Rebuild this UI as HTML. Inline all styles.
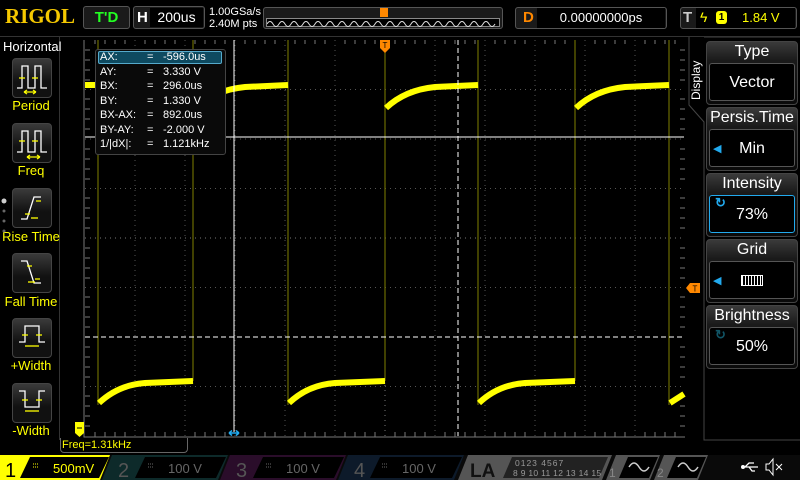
<!DOCTYPE html>
<html><head><meta charset="utf-8"><style>
*{margin:0;padding:0;box-sizing:border-box}
body{width:800px;height:480px;background:#000;overflow:hidden;position:relative;font-family:"Liberation Sans",sans-serif;color:#fff}
.a{position:absolute}
.btn{position:absolute;left:12px;width:40px;height:40px;border-radius:4px;background:linear-gradient(#3a3a3a,#111 60%);border:1px solid #444}
.lbl{position:absolute;left:0;width:62px;text-align:center;color:#ff0;font-size:13px}
.rh{position:absolute;left:706px;width:92px;height:64px;border:1px solid #444;border-radius:4px;background:linear-gradient(#3a3a3a,#1a1a1a 30%,#0a0a0a)}
.rh .t{text-align:center;font-size:16px;color:#fff;height:20px;line-height:20px}
.rh .b{position:absolute;left:2px;top:21px;width:86px;height:38px;border:1px solid #555;border-radius:3px;background:#000;text-align:center;line-height:38px;font-size:16px}
.mr td{padding:0;height:14.5px}
</style></head><body>
<!-- header -->
<div class="a" style="left:5px;top:4px;font-family:'Liberation Serif',serif;font-weight:bold;font-size:21px;color:#f5c800">RIGOL</div>
<div class="a" style="left:83px;top:6px;width:47px;height:23px;border:1px solid #555;border-radius:3px;background:#1a1a1a;color:#2f2;font-weight:bold;font-size:15px;text-align:center;line-height:22px">T'D</div>
<div class="a" style="left:133px;top:6px;width:72px;height:23px;border:1px solid #555;border-radius:3px;background:#1a1a1a"></div>
<div class="a" style="left:137px;top:9px;font-weight:bold;font-size:15px">H</div>
<div class="a" style="left:150px;top:8px;width:53px;height:19px;background:#000;font-size:14px;text-align:center;line-height:19px">200us</div>
<div class="a" style="left:209px;top:6px;font-size:11px;line-height:12px">1.00GSa/s<br>2.40M pts</div>
<div class="a" style="left:263px;top:7px;width:240px;height:22px;border:1px solid #555;border-radius:3px;background:#1a1a1a"></div>
<div class="a" style="left:266px;top:18px;width:234px;height:9px;border:1px solid #888;background:#000"></div>
<svg class="a" style="left:267px;top:19px" width="232" height="8"><path d="M0,5 q3,-5 6,0 t6,0 t6,0 t6,0 t6,0 t6,0 t6,0 t6,0 t6,0 t6,0 t6,0 t6,0 t6,0 t6,0 t6,0 t6,0 t6,0 t6,0 t6,0 t6,0 t6,0 t6,0 t6,0 t6,0 t6,0 t6,0 t6,0 t6,0 t6,0 t6,0 t6,0 t6,0 t6,0 t6,0 t6,0 t6,0 t6,0 t6,0" stroke="#ddd" fill="none"/></svg>
<div class="a" style="left:380px;top:8px;width:8px;height:9px;background:#f80"></div>
<div class="a" style="left:515px;top:7px;width:152px;height:22px;border:1px solid #555;border-radius:3px;background:#1a1a1a"></div>
<div class="a" style="left:523px;top:9px;color:#f80;font-weight:bold;font-size:15px">D</div>
<div class="a" style="left:537px;top:8px;width:128px;height:20px;background:#000;font-size:13px;text-align:center;line-height:20px">0.00000000ps</div>
<div class="a" style="left:680px;top:7px;width:117px;height:22px;border:1px solid #555;border-radius:3px;background:#1a1a1a"></div>
<div class="a" style="left:683px;top:9px;color:#ccc;font-weight:bold;font-size:15px">T</div>
<div class="a" style="left:696px;top:8px;width:99px;height:20px;background:#000"></div>
<div class="a" style="left:700px;top:9px;color:#ff0;font-size:14px">ϟ</div>
<div class="a" style="left:716px;top:11px;width:11px;height:13px;background:#ff0;border-radius:3px;color:#000;font-size:10px;text-align:center;font-weight:bold;line-height:13px">1</div>
<div class="a" style="left:742px;top:10px;color:#ff0;font-size:13px">1.84 V</div>
<div class="a" style="left:0;top:36px;width:800px;height:1px;background:#333"></div>

<!-- left menu -->
<div class="a" style="left:0;top:37px;width:60px;height:403px;border-right:1px solid #333"></div>
<div class="a" style="left:3px;top:39px;font-size:13px">Horizontal</div>
<div class="btn" style="top:58px"></div><div class="lbl" style="top:98px">Period</div>
<div class="btn" style="top:123px"></div><div class="lbl" style="top:163px">Freq</div>
<div class="btn" style="top:188px"></div><div class="lbl" style="top:229px">Rise Time</div>
<div class="btn" style="top:253px"></div><div class="lbl" style="top:294px">Fall Time</div>
<div class="btn" style="top:318px"></div><div class="lbl" style="top:358px">+Width</div>
<div class="btn" style="top:383px"></div><div class="lbl" style="top:423px">-Width</div>
<svg class="a" style="left:0;top:0" width="62" height="440" fill="none" stroke="#fff" stroke-width="1.3">
<path d="M17,88 H22 V66 H28 V88 H35 V66 H41 V88 H47"/><path d="M19,78h6M32,78h6" stroke="#ff0"/><path d="M24,92 H36 M24,92 l3,-2 M24,92 l3,2 M36,92 l-3,-2 M36,92 l-3,2" stroke="#ff0"/>
<path d="M17,152 H22 V131 H28 V152 H35 V131 H41 V152 H47"/><path d="M19,141h6M32,141h6" stroke="#ff0"/><path d="M27,157 H40 M27,157 l3,-2 M27,157 l3,2 M40,157 l-3,-2 M40,157 l-3,2" stroke="#ff0"/>
<path d="M21,219 H27 L34,197 H41"/><path d="M25,214h5M36,201h5" stroke="#ff0"/><path d="M31,218 H38" stroke="#ff0"/>
<path d="M21,261 H27 L34,283 H41"/><path d="M27,266h5M35,279h5" stroke="#ff0"/><path d="M28,282 H35" stroke="#ff0"/>
<path d="M19,342 H25 V326 H39 V342 H45"/><path d="M22,335h6M36,335h6" stroke="#ff0"/><path d="M25,346 H39" stroke="#ff0"/>
<path d="M19,391 H25 V407 H39 V391 H45"/><path d="M22,400h6M36,400h6" stroke="#ff0"/><path d="M25,411 H39" stroke="#ff0"/>
<circle cx="4" cy="201" r="2.5" fill="#ccc" stroke="none"/><circle cx="4" cy="211" r="1.5" fill="#666" stroke="none"/><circle cx="4" cy="221" r="1.5" fill="#666" stroke="none"/><circle cx="4" cy="231" r="1.5" fill="#666" stroke="none"/>
</svg>

<!-- grid -->
<svg class="a" style="left:0;top:0" width="800" height="480">
<g stroke="#555" stroke-width="1" stroke-dasharray="1,4">
<line x1="135" y1="40" x2="135" y2="436"/><line x1="185" y1="40" x2="185" y2="436"/><line x1="235" y1="40" x2="235" y2="436"/><line x1="285" y1="40" x2="285" y2="436"/><line x1="335" y1="40" x2="335" y2="436"/><line x1="435" y1="40" x2="435" y2="436"/><line x1="485" y1="40" x2="485" y2="436"/><line x1="535" y1="40" x2="535" y2="436"/><line x1="585" y1="40" x2="585" y2="436"/><line x1="635" y1="40" x2="635" y2="436"/>
<line x1="85" y1="89.5" x2="685" y2="89.5"/><line x1="85" y1="139" x2="685" y2="139"/><line x1="85" y1="188.5" x2="685" y2="188.5"/><line x1="85" y1="287.5" x2="685" y2="287.5"/><line x1="85" y1="386.5" x2="685" y2="386.5"/>
</g>
<g stroke="#777"><line x1="385" y1="40" x2="385" y2="436" stroke-dasharray="1,4"/><line x1="85" y1="238" x2="685" y2="238" stroke-dasharray="1,4"/></g>
<path d="M84,40 V437 H685" stroke="#777" fill="none"/>
<g stroke="#777"><path d="M85,50h5M85,60h5M85,70h5M85,80h5M85,99h5M85,109h5M85,119h5M85,129h5M85,149h5M85,159h5M85,169h5M85,179h5M85,198h5M85,208h5M85,218h5M85,228h5M85,248h5M85,258h5M85,268h5M85,278h5M85,297h5M85,307h5M85,317h5M85,327h5M85,347h5M85,357h5M85,367h5M85,377h5M85,396h5M85,406h5M85,416h5M85,426h5"/>
<path d="M95,437v-5M105,437v-5M115,437v-5M125,437v-5M145,437v-5M155,437v-5M165,437v-5M175,437v-5M195,437v-5M205,437v-5M215,437v-5M225,437v-5M245,437v-5M255,437v-5M265,437v-5M275,437v-5M295,437v-5M305,437v-5M315,437v-5M325,437v-5M345,437v-5M355,437v-5M365,437v-5M375,437v-5M395,437v-5M405,437v-5M415,437v-5M425,437v-5M445,437v-5M455,437v-5M465,437v-5M475,437v-5M495,437v-5M505,437v-5M515,437v-5M525,437v-5M545,437v-5M555,437v-5M565,437v-5M575,437v-5M595,437v-5M605,437v-5M615,437v-5M625,437v-5M645,437v-5M655,437v-5M665,437v-5M675,437v-5"/>
<path d="M95,40v4M105,40v4M115,40v4M125,40v4M145,40v4M155,40v4M165,40v4M175,40v4M195,40v4M205,40v4M215,40v4M225,40v4M245,40v4M255,40v4M265,40v4M275,40v4M295,40v4M305,40v4M315,40v4M325,40v4M345,40v4M355,40v4M365,40v4M375,40v4M395,40v4M405,40v4M415,40v4M425,40v4M445,40v4M455,40v4M465,40v4M475,40v4M495,40v4M505,40v4M515,40v4M525,40v4M545,40v4M555,40v4M565,40v4M575,40v4M595,40v4M605,40v4M615,40v4M625,40v4M645,40v4M655,40v4M665,40v4M675,40v4"/>
<path d="M685,50h-5M685,60h-5M685,70h-5M685,80h-5M685,99h-5M685,109h-5M685,119h-5M685,129h-5M685,149h-5M685,159h-5M685,169h-5M685,179h-5M685,198h-5M685,208h-5M685,218h-5M685,228h-5M685,248h-5M685,258h-5M685,268h-5M685,278h-5M685,297h-5M685,307h-5M685,317h-5M685,327h-5M685,347h-5M685,357h-5M685,367h-5M685,377h-5M685,396h-5M685,406h-5M685,416h-5M685,426h-5"/></g>
<g stroke="#6b6b00" stroke-width="1.2"><line x1="98" y1="40" x2="98" y2="405"/><line x1="193" y1="40" x2="193" y2="381"/><line x1="288" y1="40" x2="288" y2="405"/><line x1="385" y1="40" x2="385" y2="381"/><line x1="478" y1="40" x2="478" y2="405"/><line x1="575" y1="40" x2="575" y2="381"/><line x1="669" y1="40" x2="669" y2="405"/></g>
<g stroke="#ff0" stroke-width="6" fill="none">
<path d="M85,85 H98"/>
<path d="M99,403 Q118,385 145,383 L193,381"/>
<path d="M194,108 Q215,90 245,87 L288,85"/>
<path d="M289,403 Q308,385 335,383 L385,381"/>
<path d="M386,108 Q405,90 435,87 L478,85"/>
<path d="M479,403 Q498,385 525,383 L575,381"/>
<path d="M576,108 Q595,90 625,87 L669,85"/>
<path d="M670,403 L684,394"/>
</g>
<line x1="234" y1="40" x2="234" y2="432" stroke="#fff"/>
<line x1="458" y1="40" x2="458" y2="436" stroke="#fff" stroke-dasharray="5,3"/>
<line x1="85" y1="137" x2="684" y2="137" stroke="#fff"/>
<line x1="85" y1="337" x2="684" y2="337" stroke="#fff" stroke-dasharray="5,3"/>
<path d="M229,433 H239 M229,433 l3,-2.5 M229,433 l3,2.5 M239,433 l-3,-2.5 M239,433 l-3,2.5" stroke="#2ae" stroke-width="1.5"/>
<path d="M380,40 H390 V48 L385,53 L380,48 Z" fill="#f80"/><text x="385" y="48" font-size="8" fill="#000" text-anchor="middle" font-family="Liberation Sans">T</text>
<path d="M686,288 L690,283 H700 V293 H690 Z" fill="#f80"/><text x="695" y="291.5" font-size="8" fill="#000" text-anchor="middle" font-family="Liberation Sans">T</text>
<path d="M75,422 H84 V433 L79.5,437 L75,433 Z" fill="#ff0"/><path d="M77,428 h5" stroke="#000"/>
</svg>

<div class="a" style="left:95px;top:49px;width:131px;height:106px;background:#0a0a0a;border:1px solid #444;border-radius:3px"></div>
<div class="a" style="left:98px;top:51px;width:124px;height:13px;background:#0e4a60;border:1px solid #5ac;border-radius:2px"></div>
<table class="a mr" style="left:100px;top:50px;font-size:11px;border-collapse:collapse;line-height:14.5px">
<tr><td style="width:47px">AX:</td><td style="width:16px">=</td><td>-596.0us</td></tr>
<tr><td>AY:</td><td>=</td><td>3.330 V</td></tr>
<tr><td>BX:</td><td>=</td><td>296.0us</td></tr>
<tr><td>BY:</td><td>=</td><td>1.330 V</td></tr>
<tr><td>BX-AX:</td><td>=</td><td>892.0us</td></tr>
<tr><td>BY-AY:</td><td>=</td><td>-2.000 V</td></tr>
<tr><td>1/|dX|:</td><td>=</td><td>1.121kHz</td></tr>
</table>

<div class="a" style="left:60px;top:438px;width:128px;height:15px;border:1px solid #666;border-top:none;border-radius:0 0 4px 4px;color:#ff0;font-size:11px;padding-left:1px;line-height:14px">Freq=1.31kHz</div>

<svg class="a" style="left:686px;top:37px" width="114" height="404"><path d="M3,0 V68 L18,85 V403 H114" stroke="#444" fill="none"/><path d="M18,0 H114" stroke="#444" fill="none"/></svg>
<div class="a" style="left:689px;top:100px;transform:rotate(-90deg);transform-origin:0 0;font-size:12px">Display</div>
<div class="rh" style="top:41px"><div class="t">Type</div><div class="b">Vector</div></div>
<div class="rh" style="top:107px"><div class="t">Persis.Time</div><div class="b">Min<span style="position:absolute;left:3px;top:0;color:#2ae;font-size:11px">◀</span></div></div>
<div class="rh" style="top:173px"><div class="t">Intensity</div><div class="b" style="border-color:#2ae">73%<span style="position:absolute;left:5px;top:-12px;color:#2ae;font-size:13px;font-weight:bold">↻</span></div></div>
<div class="rh" style="top:239px"><div class="t">Grid</div><div class="b"><span style="display:inline-block;width:22px;height:11px;border:1px solid #fff;vertical-align:middle;background:repeating-linear-gradient(90deg,#fff 0 1px,#000 1px 3px)"></span><span style="position:absolute;left:3px;top:0;color:#2ae;font-size:11px">◀</span></div></div>
<div class="rh" style="top:305px"><div class="t">Brightness</div><div class="b">50%<span style="position:absolute;left:5px;top:-12px;color:#156;font-size:13px;font-weight:bold">↻</span></div></div>

<svg class="a" style="left:0;top:455px" width="800" height="25" font-family="Liberation Sans">
<rect x="0" y="0" width="800" height="25" fill="#0a0a0a"/>
<path d="M0,0 H110 L100,25 H0Z" fill="#ff0"/>
<path d="M30,2 H109 L99,23 H20Z" fill="#000"/>
<text x="5" y="22" font-size="20" fill="#000">1</text>
<text x="53" y="18" font-size="13" fill="#ff0">500mV</text><path d="M33,9h6M33,12h6" stroke="#ff0" stroke-dasharray="1,1"/>
<path d="M112,0 H228 L218,25 H102Z" fill="#0d2a2a"/>
<path d="M145,2 H226 L216,23 H135Z" fill="#000"/>
<text x="118" y="22" font-size="20" fill="#555">2</text><text x="168" y="18" font-size="13" fill="#666">100 V</text><path d="M148,9h6M148,12h6" stroke="#666" stroke-dasharray="1,1"/>
<path d="M230,0 H346 L336,25 H220Z" fill="#2a0d2a"/>
<path d="M263,2 H344 L334,23 H253Z" fill="#000"/>
<text x="236" y="22" font-size="20" fill="#555">3</text><text x="286" y="18" font-size="13" fill="#666">100 V</text><path d="M266,9h6M266,12h6" stroke="#666" stroke-dasharray="1,1"/>
<path d="M348,0 H464 L454,25 H338Z" fill="#0d1a2a"/>
<path d="M380,2 H462 L452,23 H370Z" fill="#000"/>
<text x="354" y="22" font-size="20" fill="#555">4</text><text x="402" y="18" font-size="13" fill="#666">100 V</text><path d="M382,9h6M382,12h6" stroke="#666" stroke-dasharray="1,1"/>
<path d="M468,0 H612 L602,25 H458Z" fill="#555"/>
<text x="470" y="22" font-size="19" font-weight="bold" fill="#111">LA</text>
<path d="M512,2 H608 L599,23 H503Z" fill="#222"/>
<text x="515" y="11" font-size="8.5" fill="#999" letter-spacing="1">0123 4567</text>
<text x="513" y="21" font-size="8.5" fill="#999" letter-spacing="0.3">8 9 10 11 12 13 14 15</text>
<path d="M616,0 H660 L650,25 H606Z" fill="#555"/><path d="M628,2 H658 L649,23 H619Z" fill="#000"/>
<text x="609" y="22" font-size="12" fill="#888">1</text><path d="M629,12 q5,-8 10,0 t10,0" stroke="#ccc" fill="none" stroke-width="1.5"/>
<path d="M664,0 H708 L698,25 H654Z" fill="#555"/><path d="M676,2 H706 L697,23 H667Z" fill="#000"/>
<text x="657" y="22" font-size="12" fill="#888">2</text><path d="M678,12 q5,-8 10,0 t10,0" stroke="#ccc" fill="none" stroke-width="1.5"/>
<path d="M742,12 H758 M745,12 l4,-4 h5 M749,12 l3,4 h3" stroke="#fff" fill="none" stroke-width="1.3"/><circle cx="743" cy="12" r="2" fill="#fff"/>
<path d="M766,9 h3 l4,-5 v16 l-4,-5 h-3Z" stroke="#fff" fill="none"/><path d="M776,9 l6,6 M782,9 l-6,6" stroke="#fff"/>
</svg>
</body></html>
